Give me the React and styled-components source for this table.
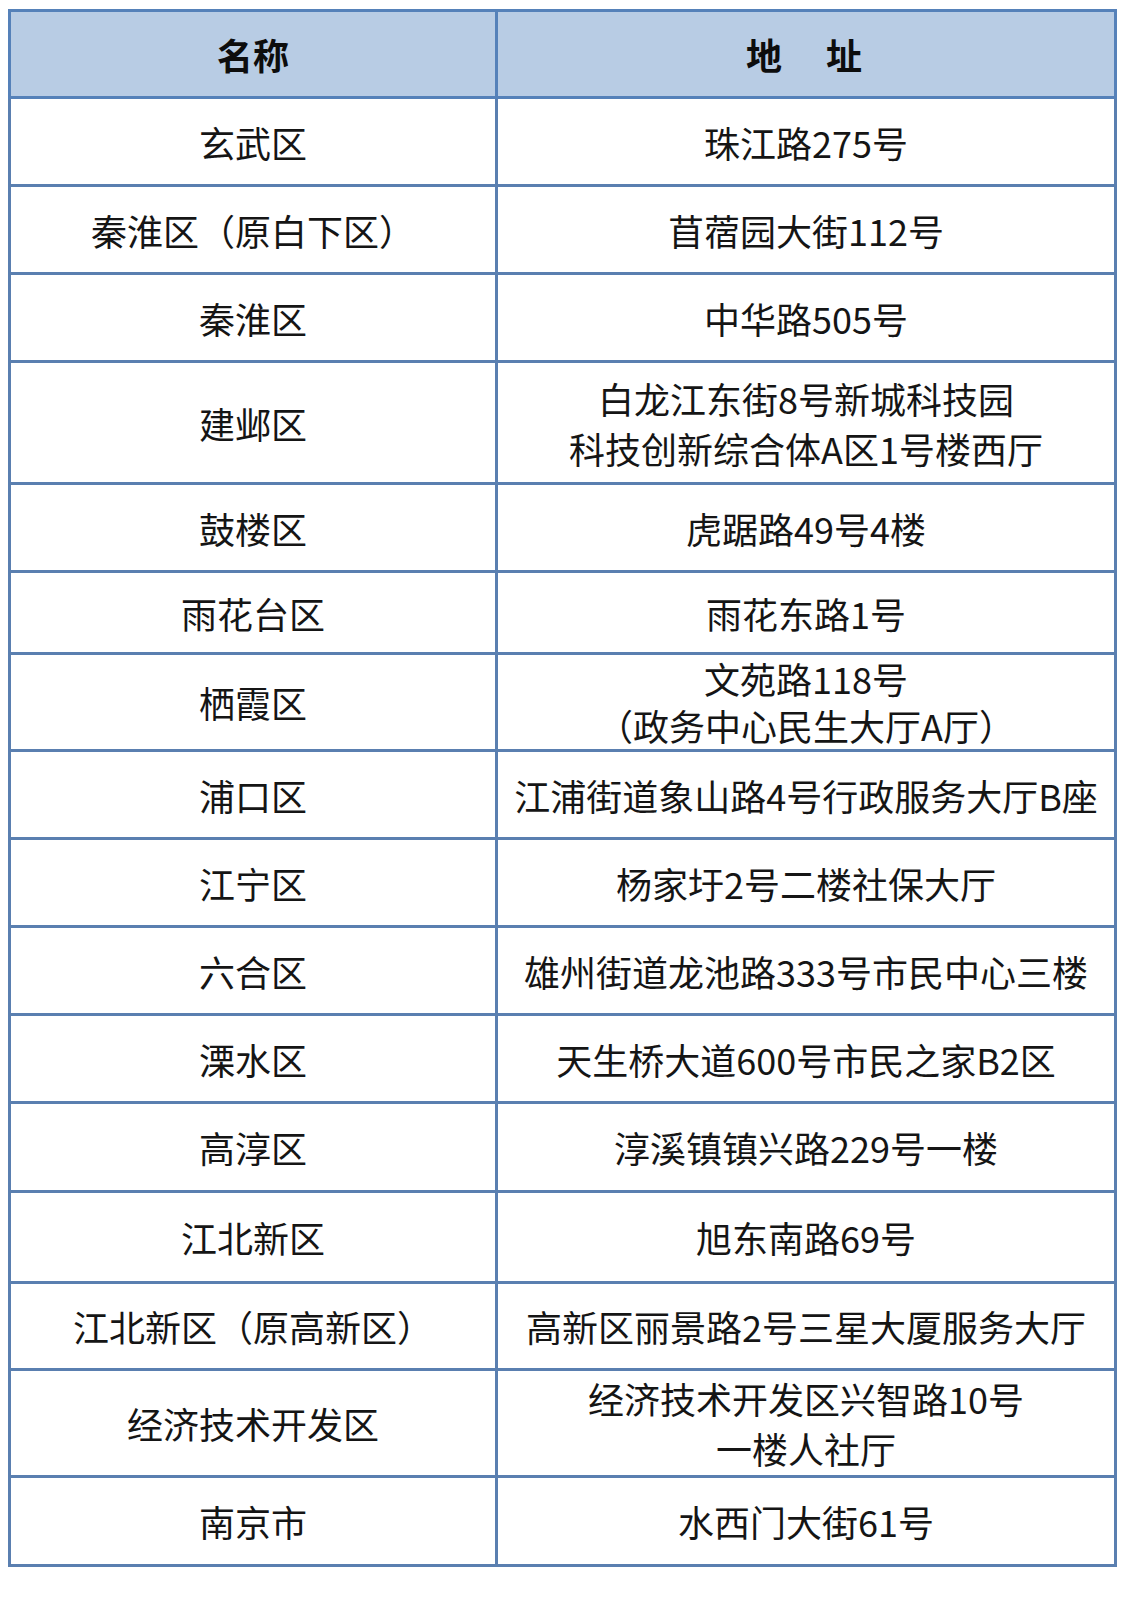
import React from "react";
import styled, { createGlobalStyle } from "styled-components";

const Global = createGlobalStyle`
  html, body { margin: 0; padding: 0; background: #ffffff; }
  body { padding: 9px 0 0 8px; font-family: "Noto Sans CJK SC", "Noto Sans", sans-serif; }
`;

const Table = styled.table`
  border-collapse: collapse;
  width: 1106px;
  table-layout: fixed;
  color: #151515;
  font-size: 36px;
`;

const Col = styled.col`
  width: ${(p) => p.$w}px;
`;

const HeadCell = styled.th`
  background: #b8cce4;
  border: 3px solid #5581b9;
  height: 84px;
  padding: 0;
  font-weight: 700;
  text-align: center;
  vertical-align: middle;
  color: #0d0d0d;
  letter-spacing: ${(p) => (p.$spaced ? "4px" : "0")};
`;

const Row = styled.tr`
  height: ${(p) => p.$h}px;
`;

const Cell = styled.td`
  border: 3px solid #5a7fb0;
  padding: 0;
  text-align: center;
  vertical-align: middle;
  line-height: ${(p) => (p.$tight ? "47px" : "50px")};
  white-space: nowrap;
`;

const Line = styled.div`
  display: block;
`;

const rows = [
  { name: "玄武区", addr: ["珠江路275号"], h: 88 },
  { name: "秦淮区（原白下区）", addr: ["苜蓿园大街112号"], h: 88 },
  { name: "秦淮区", addr: ["中华路505号"], h: 88 },
  { name: "建邺区", addr: ["白龙江东街8号新城科技园", "科技创新综合体A区1号楼西厅"], h: 122 },
  { name: "鼓楼区", addr: ["虎踞路49号4楼"], h: 88 },
  { name: "雨花台区", addr: ["雨花东路1号"], h: 82 },
  { name: "栖霞区", addr: ["文苑路118号", "（政务中心民生大厅A厅）"], h: 87, tight: true },
  { name: "浦口区", addr: ["江浦街道象山路4号行政服务大厅B座"], h: 88 },
  { name: "江宁区", addr: ["杨家圩2号二楼社保大厅"], h: 88 },
  { name: "六合区", addr: ["雄州街道龙池路333号市民中心三楼"], h: 88 },
  { name: "溧水区", addr: ["天生桥大道600号市民之家B2区"], h: 88 },
  { name: "高淳区", addr: ["淳溪镇镇兴路229号一楼"], h: 89 },
  { name: "江北新区", addr: ["旭东南路69号"], h: 91 },
  { name: "江北新区（原高新区）", addr: ["高新区丽景路2号三星大厦服务大厅"], h: 87 },
  { name: "经济技术开发区", addr: ["经济技术开发区兴智路10号", "一楼人社厅"], h: 107 },
  { name: "南京市", addr: ["水西门大街61号"], h: 89 },
];

export default function App() {
  return (
    <>
      <Global />
      <Table>
        <colgroup>
          <Col $w={487} />
          <Col $w={619} />
        </colgroup>
        <thead>
          <tr>
            <HeadCell>名称</HeadCell>
            <HeadCell $spaced>地　址</HeadCell>
          </tr>
        </thead>
        <tbody>
          {rows.map((r) => (
            <Row key={r.name + r.addr[0]} $h={r.h}>
              <Cell>{r.name}</Cell>
              <Cell $tight={r.tight}>
                {r.addr.map((a) => (
                  <Line key={a}>{a}</Line>
                ))}
              </Cell>
            </Row>
          ))}
        </tbody>
      </Table>
    </>
  );
}
